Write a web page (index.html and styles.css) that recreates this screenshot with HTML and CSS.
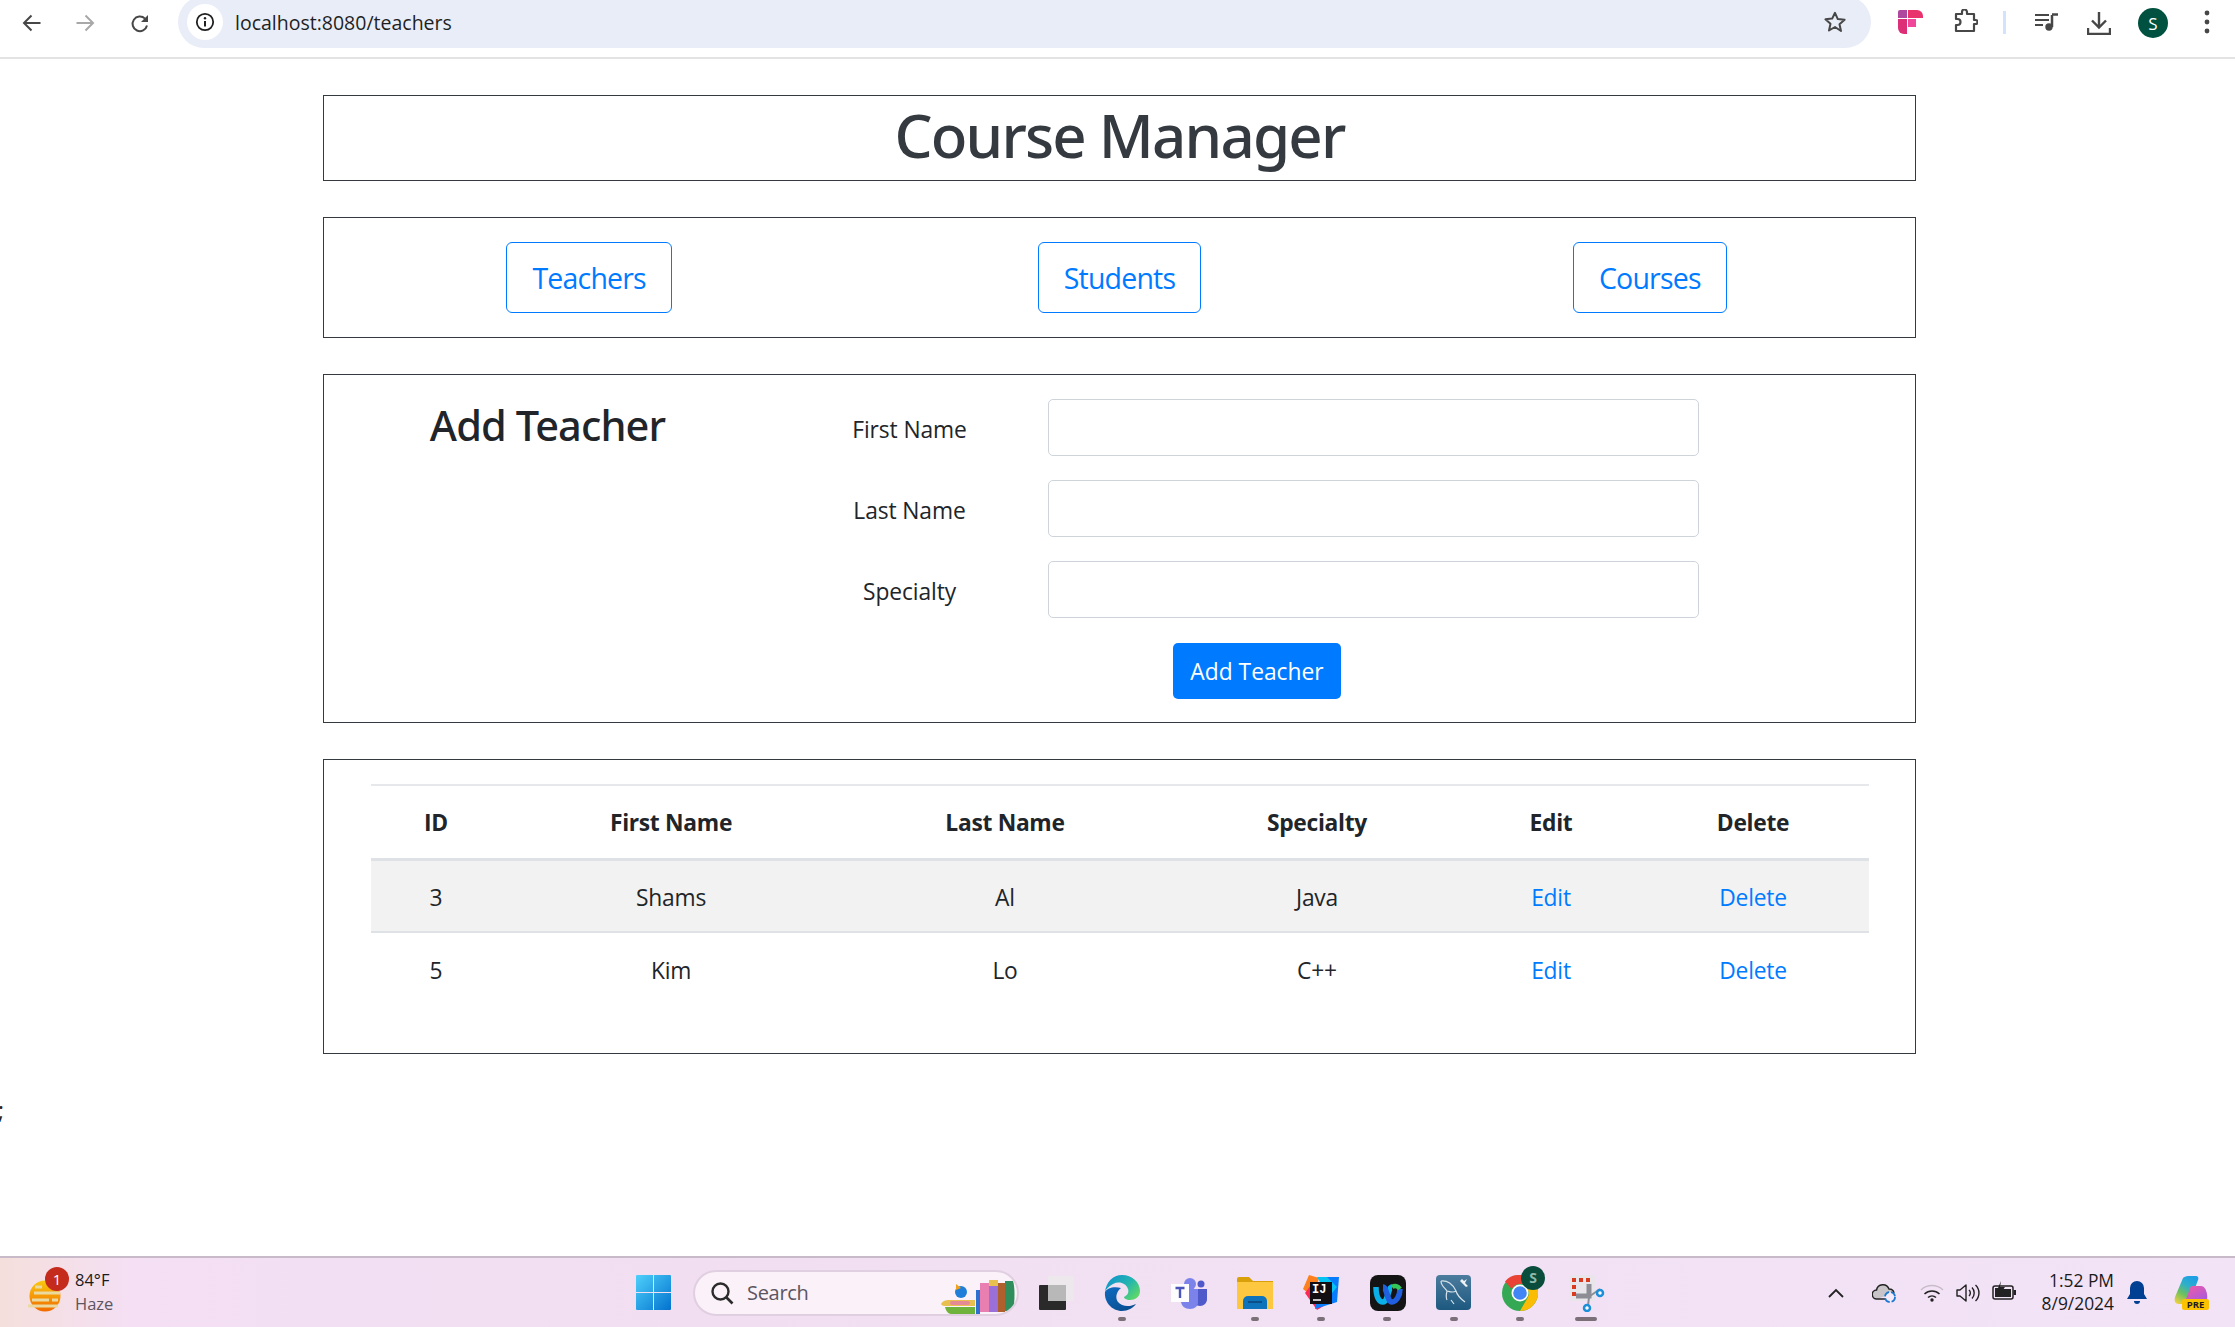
FILE: index.html
```html
<!DOCTYPE html>
<html lang="en">
<head>
    <meta charset="UTF-8">
    <title>Course Manager</title>
    <link rel="stylesheet" href="styles.css">
</head>
<body>
    <header class="chrome">
        <svg class="nav-icon" width="19" height="18" viewBox="0 0 19 18"><path d="M18.5 9H2M9.5 1.5 2 9l7.5 7.5" fill="none" stroke="#474747" stroke-width="2"/></svg>
        <svg class="nav-icon nav-forward" width="19" height="18" viewBox="0 0 19 18"><path d="M.5 9H17M9.5 1.5 17 9l-7.5 7.5" fill="none" stroke="#a8a8a8" stroke-width="2"/></svg>
        <svg class="nav-icon nav-reload" width="20" height="20" viewBox="0 0 20 20"><path d="M17 11.5A7.3 7.3 0 1 1 15 4.6" fill="none" stroke="#474747" stroke-width="2"/><path d="M18 1v7h-7z" fill="#474747"/></svg>
        <div class="urlbar">
            <span class="site-info">
                <svg width="20" height="20" viewBox="0 0 20 20"><circle cx="10" cy="10" r="8.2" fill="none" stroke="#1f1f1f" stroke-width="1.8"/><path d="M10 9v5.5" stroke="#1f1f1f" stroke-width="2"/><circle cx="10" cy="6.2" r="1.2" fill="#1f1f1f"/></svg>
            </span>
            <span class="url-text">localhost:8080/teachers</span>
            <svg class="star" width="24" height="24" viewBox="0 0 24 24"><path d="M12 2.8l2.8 6.3 6.8.7-5.1 4.5 1.5 6.7L12 17l-6 3.5 1.5-6.7-5.1-4.5 6.8-.7z" fill="none" stroke="#474747" stroke-width="2" stroke-linejoin="round"/></svg>
        </div>
        <svg class="ext-flag" width="25" height="24" viewBox="0 0 25 24"><path d="M0 2a2 2 0 0 1 2-2h7v8H0z" fill="#b0479f"/><path d="M10 0h9a6 6 0 0 1 6 6v2H10z" fill="#e8336d"/><path d="M0 9h9v15H6a6 6 0 0 1-6-6z" fill="#dd2f78"/><path d="M10 9h8v8h-8z" fill="#f0479a"/></svg>
        <svg class="ext-puzzle" width="24" height="24" viewBox="0 0 24 24"><path d="M2 5h6V3a2.5 2.5 0 0 1 5 0v2h7v6h1.500a2 2 0 0 1 0 4H20v7H2v-6h1.500a3 3 0 0 0 0-6H2z" fill="none" stroke="#474747" stroke-width="2.200" stroke-linejoin="round"/></svg>
        <span class="chrome-divider"></span>
        <svg class="media-icon" width="23" height="18" viewBox="0 0 23 18"><path d="M0 2h14M0 7h14M0 12h8" stroke="#474747" stroke-width="2"/><path d="M17 2v12" stroke="#474747" stroke-width="2.500"/><path d="M17 1.500h6" stroke="#474747" stroke-width="2.500"/><circle cx="14" cy="14" r="3.700" fill="#474747"/></svg>
        <svg class="download-icon" width="24" height="24" viewBox="0 0 24 24"><path d="M12 1v15M5 9.500l7 7 7-7" fill="none" stroke="#474747" stroke-width="2.400"/><path d="M1 17v6h22v-6" fill="none" stroke="#474747" stroke-width="2.400"/></svg>
        <span class="avatar">S</span>
        <svg class="menu-dots" width="6" height="24" viewBox="0 0 6 24"><circle cx="3" cy="3" r="2.400" fill="#474747"/><circle cx="3" cy="12" r="2.400" fill="#474747"/><circle cx="3" cy="21" r="2.400" fill="#474747"/></svg>
    </header>

    <main class="page">
        <section class="card card-title">
            <h1 class="app-title">Course Manager</h1>
        </section>

        <section class="card card-nav">
            <div class="nav-cell"><a class="btn-outline" href="#">Teachers</a></div>
            <div class="nav-cell"><a class="btn-outline" href="#">Students</a></div>
            <div class="nav-cell"><a class="btn-outline" href="#">Courses</a></div>
        </section>

        <section class="card card-form">
            <h2 class="form-title">Add Teacher</h2>
            <form class="teacher-form">
                <label class="form-label" for="firstName">First Name</label>
                <input class="form-input" type="text" id="firstName">
                <label class="form-label" for="lastName">Last Name</label>
                <input class="form-input" type="text" id="lastName">
                <label class="form-label" for="specialty">Specialty</label>
                <input class="form-input" type="text" id="specialty">
                <button class="btn-primary" type="button">Add Teacher</button>
            </form>
        </section>

        <section class="card card-table">
            <table class="teacher-table">
                <colgroup>
                    <col class="col-id"><col class="col-first"><col class="col-last"><col class="col-spec"><col class="col-edit"><col class="col-delete">
                </colgroup>
                <thead>
                    <tr><th>ID</th><th>First Name</th><th>Last Name</th><th>Specialty</th><th>Edit</th><th>Delete</th></tr>
                </thead>
                <tbody>
                    <tr class="row-striped"><td>3</td><td>Shams</td><td>Al</td><td>Java</td><td><a href="#">Edit</a></td><td><a href="#">Delete</a></td></tr>
                    <tr><td>5</td><td>Kim</td><td>Lo</td><td>C++</td><td><a href="#">Edit</a></td><td><a href="#">Delete</a></td></tr>
                </tbody>
            </table>
        </section>
        <div class="stray">;</div>
    </main>

    <footer class="taskbar">
        <div class="tb-weather">
            <span class="weather-icon">
                <svg width="33" height="32" viewBox="0 0 33 32"><defs><linearGradient id="sun" x1="0" y1="0" x2="0" y2="1"><stop offset="0" stop-color="#f9c80e"/><stop offset="1" stop-color="#f26a00"/></linearGradient></defs><circle cx="17" cy="16" r="15.500" fill="url(#sun)"/><path d="M7 7h7M6 13h26M4 20h17M24 20h6M0 26h30" stroke="#ead9a0" stroke-width="3"/></svg>
                <span class="weather-badge">1</span>
            </span>
            <span class="weather-text">
                <span class="weather-temp">84°F</span>
                <span class="weather-desc">Haze</span>
            </span>
        </div>
        <svg class="win-logo" width="35" height="35" viewBox="0 0 35 35"><defs><linearGradient id="win" x1="0" y1="0" x2="1" y2="1"><stop offset="0" stop-color="#4fd0fb"/><stop offset="1" stop-color="#0272cf"/></linearGradient></defs><path d="M1 0h16v17H0V1a1 1 0 0 1 1-1zM18 0h16a1 1 0 0 1 1 1v16H18zM0 18h17v17H1a1 1 0 0 1-1-1zM18 18h17v16a1 1 0 0 1-1 1H18z" fill="url(#win)"/></svg>
        <div class="tb-search">
            <svg width="24" height="24" viewBox="0 0 24 24"><circle cx="10.500" cy="10.500" r="8" fill="none" stroke="#2b2b2b" stroke-width="2.400"/><path d="M16.500 16.500l6 6" stroke="#2b2b2b" stroke-width="2.600"/></svg>
            <span class="search-text">Search</span>
            <svg class="search-books" width="76" height="34" viewBox="0 0 76 34"><path d="M0 24c2-4 6-4 10-4h24v6H6c-3 0-5 0-6-2z" fill="#e8c050"/><path d="M4 27h30v7H10c-3 0-5-3-6-7z" fill="#6fb33c"/><rect x="9" y="21" width="20" height="4" rx="2" fill="#e58a94"/><circle cx="20" cy="12" r="6" fill="#1f7fd8"/><path d="M15 4l5 4-5 2z" fill="#f0a020"/><rect x="35" y="10" width="4" height="24" fill="#2f6fd0"/><rect x="39" y="3" width="9" height="29" fill="#e87fb0"/><rect x="48" y="0" width="9" height="32" fill="#9a6fd8"/><rect x="57" y="3" width="7" height="29" fill="#b0602c"/><path d="M64 1h8c2 6 2 20 0 30h-8z" fill="#2f8f5c"/><rect x="48" y="0" width="9" height="6" fill="#e8c050"/></svg>
        </div>
        <div class="tb-apps">
            <div class="tb-app">
                <svg width="35" height="34" viewBox="0 0 35 34"><rect x="9" y="0" width="26" height="25" rx="1" fill="#ece8ec"/><rect x="0" y="9" width="27" height="25" rx="1" fill="#2a2a2a"/><rect x="9" y="9" width="18" height="16" fill="#b8b8b8"/></svg>
            </div>
            <div class="tb-app">
                <svg width="36" height="36" viewBox="0 0 36 36"><defs><linearGradient id="edgeTop" x1="0" y1="0" x2="1" y2=".7"><stop offset="0" stop-color="#0f8fd0"/><stop offset=".6" stop-color="#23b5b0"/><stop offset="1" stop-color="#5cd66a"/></linearGradient><linearGradient id="edgeLow" x1="0" y1="0" x2=".6" y2="1"><stop offset="0" stop-color="#0f6cc0"/><stop offset="1" stop-color="#0a4f94"/></linearGradient></defs><path d="M18 0c10 0 18 7 18 16 0 6-5 9-10 9-4 0-6-2-6-3 4-2 5-5 4-8-2-6-9-8-15-5-4 2-7 5-8 8C2 7 9 0 18 0z" fill="url(#edgeTop)"/><path d="M1 17c-1 10 7 19 17 19 6 0 11-3 14-7-6 3-14 3-18-2-3-4-2-10 3-14-7-2-14 0-16 4z" fill="url(#edgeLow)"/></svg>
            </div>
            <div class="tb-app">
                <svg width="36" height="33" viewBox="0 0 36 33"><circle cx="19" cy="8" r="6" fill="#7b83eb"/><circle cx="30" cy="8" r="3.500" fill="#5059c9"/><path d="M24 13h12v10c0 4-3 7-7 7-2 0-4-1-5-2z" fill="#5059c9"/><path d="M10 13h17v13c0 4-3 7-8 7-5 0-9-3-9-8z" fill="#7b83eb"/><rect x="0" y="8" width="18" height="18" fill="#fdfdfd"/><path d="M4.500 12h9M9 12v10" stroke="#4b53bc" stroke-width="2.400"/></svg>
            </div>
            <div class="tb-app">
                <svg width="36" height="32" viewBox="0 0 36 32"><path d="M0 2a2 2 0 0 1 2-2h10l4 4h20v6H0z" fill="#d9a009"/><path d="M0 5h36v27H0z" fill="#fdc73f"/><path d="M6 32v-8a5 5 0 0 1 5-5h14a5 5 0 0 1 5 5v8z" fill="#0f73bc"/><path d="M11 25h14" stroke="#0b4f86" stroke-width="2"/></svg>
            </div>
            <div class="tb-app">
                <svg width="36" height="35" viewBox="0 0 36 35"><path d="M6 0l10 3L10 22 0 14z" fill="#fc801d"/><path d="M2 18l12 17 10-6L8 10z" fill="#fe2857"/><path d="M18 2l18 0-2 25-22 7z" fill="#087cfa"/><path d="M14 2l10 0 10 10-8 10z" fill="#07c3f2"/><rect x="7" y="7" width="22" height="22" fill="#120e12"/><text class="ij-text" x="9" y="18">IJ</text><path d="M10 25h8" stroke="#fff" stroke-width="1.500"/></svg>
            </div>
            <div class="tb-app">
                <svg width="36" height="36" viewBox="0 0 36 36"><rect width="36" height="36" rx="8" fill="#141414"/><path d="M6 12c0 10 3 15 7 15 5 0 5-15 9-15" fill="none" stroke="#0bb0e8" stroke-width="5.500"/><path d="M13 12c4 0 4 15 9 15 4 0 8-6 8-13" fill="none" stroke="#1f5fe0" stroke-width="5.500"/><path d="M22 12c3-2 6-1 8 2" fill="none" stroke="#34c759" stroke-width="4.500"/></svg>
            </div>
            <div class="tb-app">
                <svg width="35" height="35" viewBox="0 0 35 35"><defs><linearGradient id="sql" x1="0" y1="0" x2="0" y2="1"><stop offset="0" stop-color="#4c7c9e"/><stop offset="1" stop-color="#1d587f"/></linearGradient></defs><rect width="35" height="35" rx="4" fill="url(#sql)"/><path d="M5 6c6-1 12 3 15 10 1 4 5 8 9 11M5 6c0 5 4 7 6 10-1 4-1 7 0 9M20 16c-3 2-5 1-9 0M15 25l3 4" fill="none" stroke="#d5e2ea" stroke-width="1.200"/><path d="M26 4l2 2 3-2-2 4 3 3-2 1-3-3-3-3z" fill="#eef3f6"/></svg>
            </div>
            <div class="tb-app">
                <svg width="36" height="36" viewBox="0 0 36 36"><circle cx="18" cy="18" r="18" fill="#34a853"/><path d="M18 0a18 18 0 0 1 15.600 9H18a9 9 0 0 0-8.200 5L3 6.500A18 18 0 0 1 18 0z" fill="#ea4335"/><path d="M33.600 9A18 18 0 0 1 18 36l7.800-13.500A9 9 0 0 0 25.500 14z" fill="#fbbc05"/><circle cx="18" cy="18" r="8.500" fill="#fff"/><circle cx="18" cy="18" r="6.800" fill="#4285f4"/></svg>
                <span class="chrome-badge">S</span>
            </div>
            <div class="tb-app">
                <svg class="snip-icon" width="36" height="37" viewBox="0 0 36 37"><rect width="26" height="26" rx="2" fill="#e8e6ea"/><path d="M3 3h4v4H3zM10 3h4v4h-4zM17 3h4v4h-4zM3 10h4v4H3zM3 17h4v4H3z" fill="#d83b20"/><path d="M20 9v12H7" fill="none" stroke="#8d8d96" stroke-width="5"/><path d="M21 21l10-7M20 22l-1 9" stroke="#8d8d96" stroke-width="2"/><circle cx="31" cy="18" r="3" fill="#fff" stroke="#1b8fd8" stroke-width="2.500"/><circle cx="18" cy="33" r="3" fill="#fff" stroke="#1b8fd8" stroke-width="2.500"/></svg>
            </div>
        </div>
        <div class="tb-tray">
            <svg class="tray-chevron" width="16" height="10" viewBox="0 0 16 10"><path d="M1 9l7-7 7 7" fill="none" stroke="#222" stroke-width="1.800"/></svg>
            <svg class="tray-cloud" width="24" height="20" viewBox="0 0 24 20"><path d="M5 16a4.500 4.500 0 0 1-.5-9 6.500 6.500 0 0 1 12.500-1 5 5 0 0 1 5 4" fill="#c8c4c8" stroke="#222" stroke-width="1.500"/><path d="M5 16h9" stroke="#222" stroke-width="1.500"/><circle cx="18" cy="14" r="5" fill="#f7eaf8" stroke="#1a79d1" stroke-width="1.800" stroke-dasharray="6 2"/></svg>
            <svg class="tray-wifi" width="24" height="18" viewBox="0 0 24 18"><path d="M1 6a16 16 0 0 1 22 0" fill="none" stroke="#c9bcc9" stroke-width="1.500"/><path d="M4.500 10a11 11 0 0 1 15 0M8 13.500a6 6 0 0 1 8 0" fill="none" stroke="#222" stroke-width="1.500"/><circle cx="12" cy="16" r="1.700" fill="#222"/></svg>
            <svg class="tray-sound" width="24" height="20" viewBox="0 0 24 20"><path d="M1 7v6h3l6 5V2L4 7z" fill="none" stroke="#222" stroke-width="1.400" stroke-linejoin="round"/><path d="M13 7a4 4 0 0 1 0 6M16 4.500a8 8 0 0 1 0 11M19.500 2a11 11 0 0 1 0 16" fill="none" stroke="#222" stroke-width="1.400"/></svg>
            <svg class="tray-battery" width="24" height="20" viewBox="0 0 24 20"><rect x="1" y="5" width="20" height="13" rx="2" fill="none" stroke="#222" stroke-width="1.500"/><rect x="21.500" y="9" width="2.500" height="5" fill="#222"/><path d="M3 16V7h3l3-7-1 6h5l-7 10z" fill="#222"/><rect x="5" y="8" width="14" height="8" fill="#222"/></svg>
            <div class="tray-clock"><span>1:52 PM</span><span>8/9/2024</span></div>
            <svg class="tray-bell" width="20" height="23" viewBox="0 0 20 23"><path d="M10 0a7 7 0 0 1 7 7v6l3 5H0l3-5V7a7 7 0 0 1 7-7z" fill="#003f92"/><path d="M7 20h6a3 3 0 0 1-6 0z" fill="#003f92"/></svg>
            <span class="copilot">
                <svg width="34" height="30" viewBox="0 0 34 30"><defs><linearGradient id="cop1" x1=".7" y1="0" x2=".2" y2="1"><stop offset="0" stop-color="#1e9fe6"/><stop offset=".35" stop-color="#2fb0c8"/><stop offset=".65" stop-color="#6cc060"/><stop offset="1" stop-color="#e8d040"/></linearGradient><linearGradient id="cop2" x1=".2" y1="0" x2=".9" y2="1"><stop offset="0" stop-color="#f05aa8"/><stop offset="1" stop-color="#9a5ae6"/></linearGradient></defs><path d="M9 2c1-1 3-2 5-2h8c2 0 3 2 2 4L15 28H5c-4 0-5-3-4-7z" fill="url(#cop1)"/><path d="M17 10h10c3 0 5 3 6 8 1 6-1 10-4 10H10z" fill="url(#cop2)"/></svg>
                <span class="copilot-pre">PRE</span>
            </span>
        </div>
    </footer>
</body>
</html>
```

FILE: styles.css
```css
* {
    box-sizing: border-box;
}
html, body {
    height: 100%;
}
body {
    margin: 0;
    height: 100vh;
    overflow: hidden;
    display: flex;
    flex-direction: column;
    font-family: "Open Sans", "Noto Sans", sans-serif;
    font-size: 22.8px;
    color: #212529;
    background-color: #fff;
}

/* browser bar */
.chrome {
    height: 59px;
    flex: none;
    display: flex;
    align-items: flex-start;
    padding-left: 22px;
    border-bottom: 2px solid #e3e3e3;
    overflow: hidden;
}
.nav-icon {
    margin-top: 14px;
    flex: none;
}
.nav-forward {
    margin-left: 35px;
}
.nav-reload {
    margin-left: 35px;
}
.urlbar {
    width: 1693px;
    height: 52px;
    margin-top: -4px;
    margin-left: 28px;
    padding-left: 9px;
    flex: none;
    display: flex;
    align-items: center;
    background-color: #e9edf7;
    border-radius: 26px;
}
.site-info {
    width: 36px;
    height: 36px;
    display: flex;
    align-items: center;
    justify-content: center;
    background-color: #fff;
    border-radius: 50%;
}
.url-text {
    margin-left: 12px;
    font-size: 19.5px;
    color: #1f1f1f;
}
.star {
    margin-left: auto;
    margin-right: 24px;
}
.ext-flag {
    margin: 10px 0 0 27px;
    flex: none;
}
.ext-puzzle {
    margin: 9px 0 0 31px;
    flex: none;
}
.chrome-divider {
    width: 3px;
    height: 23px;
    margin: 11px 0 0 25px;
    background-color: #d3e3fd;
    flex: none;
}
.media-icon {
    margin: 13px 0 0 29px;
    flex: none;
}
.download-icon {
    margin: 11px 0 0 29px;
    flex: none;
}
.avatar {
    width: 30px;
    height: 30px;
    margin: 8px 0 0 27px;
    flex: none;
    display: flex;
    align-items: center;
    justify-content: center;
    font-size: 17px;
    color: #fff;
    background-color: #00513f;
    border-radius: 50%;
}
.menu-dots {
    margin: 10px 0 0 36px;
    flex: none;
}

/* page */
.page {
    flex: 1;
    min-height: 0;
    padding: 36px 0 0 323px;
}
.card {
    width: 1593px;
    border: 1px solid #343a40;
    margin-bottom: 36px;
}
.card-title {
    height: 86px;
    text-align: center;
}
.app-title {
    margin: 0;
    font-family: "Noto Sans", "Open Sans", sans-serif;
    font-size: 60px;
    font-weight: 500;
    line-height: 78px;
    letter-spacing: -1.8px;
    color: #343a40;
}
.card-nav {
    height: 121px;
    display: grid;
    grid-template-columns: 1fr 1fr 1fr;
    align-items: center;
}
.nav-cell {
    text-align: center;
}
.btn-outline {
    display: inline-block;
    height: 71px;
    padding: 0 25px;
    font-size: 28.5px;
    line-height: 70px;
    letter-spacing: -0.8px;
    color: #007bff;
    text-decoration: none;
    border: 1px solid #007bff;
    border-radius: 6px;
}
.card-form {
    height: 349px;
    padding-top: 24px;
    display: flex;
}
.form-title {
    width: 447px;
    margin: 0;
    font-family: "Noto Sans", "Open Sans", sans-serif;
    font-size: 41.5px;
    font-weight: 500;
    line-height: 52px;
    letter-spacing: -0.9px;
    text-align: center;
    color: #212529;
}
.teacher-form {
    width: 972px;
    display: grid;
    grid-template-columns: 277px 651px;
    grid-auto-rows: 57px;
    row-gap: 24px;
    align-items: center;
}
.form-label {
    text-align: center;
    font-size: 22.8px;
    letter-spacing: -0.1px;
    padding-top: 4px;
}
.form-input {
    height: 57px;
    width: 100%;
    background-color: #fff;
    border: 1px solid #ced4da;
    border-radius: 5px;
}
.btn-primary {
    grid-column: 1 / 3;
    justify-self: center;
    width: 168px;
    height: 56px;
    margin-left: 44px;
    padding: 1px 0 0;
    font-family: inherit;
    font-size: 22.8px;
    letter-spacing: 0;
    color: #fff;
    background-color: #007bff;
    border: none;
    border-radius: 5px;
}
.card-table {
    height: 295px;
    padding: 24px 46px 0 47px;
}
.teacher-table {
    width: 1498px;
    table-layout: fixed;
    border-collapse: collapse;
    text-align: center;
}
.col-id { width: 130px; }
.col-first { width: 340px; }
.col-last { width: 328px; }
.col-spec { width: 296px; }
.col-edit { width: 172px; }
.col-delete { width: 232px; }
.teacher-table th {
    height: 74px;
    padding: 2px 0 0;
    font-size: 22.8px;
    font-weight: 700;
    letter-spacing: -0.3px;
    border-top: 2px solid #e6e8ec;
    border-bottom: 3px solid #dee2e6;
}
.teacher-table td {
    height: 73px;
    padding: 3px 0 0;
    font-size: 22.8px;
    letter-spacing: -0.2px;
    border-bottom: 2px solid #dee2e6;
}
.teacher-table tbody tr:last-child td {
    border-bottom: none;
}
.teacher-table a {
    color: #007bff;
    text-decoration: none;
}
.row-striped {
    background-color: #f2f2f2;
}
.stray {
    margin: 16px 0 0 -325px;
    font-size: 23px;
    line-height: 40px;
    color: #212529;
}

/* taskbar */
.taskbar {
    height: 71px;
    flex: none;
    display: flex;
    align-items: center;
    background: linear-gradient(90deg, #f5dfdc 0, #f4dff4 130px, #f1dff1 700px, #f3e3f7 100%);
    border-top: 2px solid #c9bac9;
}
.tb-weather {
    width: 636px;
    flex: none;
    display: flex;
    align-items: center;
    padding-left: 28px;
}
.weather-icon {
    position: relative;
    display: flex;
    margin-top: 6px;
}
.weather-badge {
    position: absolute;
    top: -13px;
    left: 17px;
    width: 24px;
    height: 24px;
    font-size: 15px;
    line-height: 24px;
    text-align: center;
    color: #fff;
    background-color: #c42b1c;
    border-radius: 50%;
}
.weather-text {
    display: flex;
    flex-direction: column;
    margin-left: 14px;
    margin-top: -2px;
    font-size: 16.5px;
    line-height: 24px;
}
.weather-temp {
    color: #1b1b1b;
}
.weather-desc {
    color: #5d5660;
}
.win-logo {
    flex: none;
}
.tb-search {
    width: 326px;
    height: 46px;
    margin-left: 22px;
    padding-left: 15px;
    flex: none;
    display: flex;
    align-items: center;
    background-color: #faf1f9;
    border: 2px solid #e0cfe0;
    border-radius: 23px;
    overflow: hidden;
}
.search-text {
    margin-left: 13px;
    font-size: 20px;
    letter-spacing: -0.3px;
    color: #5c5560;
}
.search-books {
    margin-left: auto;
    margin-top: 8px;
    flex: none;
}
.tb-apps {
    margin-left: 4px;
    display: flex;
    flex: none;
}
.tb-app {
    position: relative;
    width: 66.3px;
    height: 69px;
    display: flex;
    align-items: center;
    justify-content: center;
}
.tb-app:nth-child(n+2)::after {
    content: "";
    position: absolute;
    left: 29px;
    bottom: 6px;
    width: 8px;
    height: 4px;
    background-color: #7b7078;
    border-radius: 2px;
}
.tb-app:nth-child(3)::after {
    display: none;
}
.tb-app:last-child::after {
    left: 22px;
    width: 22px;
    z-index: 0;
}
.snip-icon {
    position: relative;
    z-index: 1;
    margin-top: 2px;
}
.ij-text {
    font-family: "Liberation Mono", monospace;
    font-size: 12px;
    font-weight: 700;
    fill: #fff;
}
.chrome-badge {
    position: absolute;
    top: 8px;
    left: 34px;
    width: 24px;
    height: 24px;
    font-size: 14px;
    font-weight: 700;
    line-height: 24px;
    text-align: center;
    color: #8fb8aa;
    background-color: #0a4d3c;
    border-radius: 50%;
}
.tb-tray {
    margin-left: auto;
    padding-right: 27px;
    display: flex;
    align-items: center;
    flex: none;
}
.tray-cloud {
    margin-left: 28px;
}
.tray-wifi {
    margin-left: 24px;
}
.tray-sound {
    margin-left: 12px;
}
.tray-battery {
    margin-left: 12px;
    margin-top: -4px;
}
.tray-clock {
    width: 98px;
    display: flex;
    flex-direction: column;
    align-items: flex-end;
    margin-top: -2px;
    font-size: 17.4px;
    line-height: 23px;
    color: #1b1b1b;
}
.tray-bell {
    margin-left: 13px;
}
.copilot {
    position: relative;
    width: 34px;
    height: 34px;
    margin-left: 27px;
    display: block;
}
.copilot-pre {
    position: absolute;
    right: -1px;
    bottom: 0;
    width: 27px;
    height: 11px;
    font-size: 9.5px;
    font-weight: 700;
    line-height: 11px;
    text-align: center;
    color: #1b1b1b;
    background-color: #fcc200;
    border-radius: 2px;
}
```
